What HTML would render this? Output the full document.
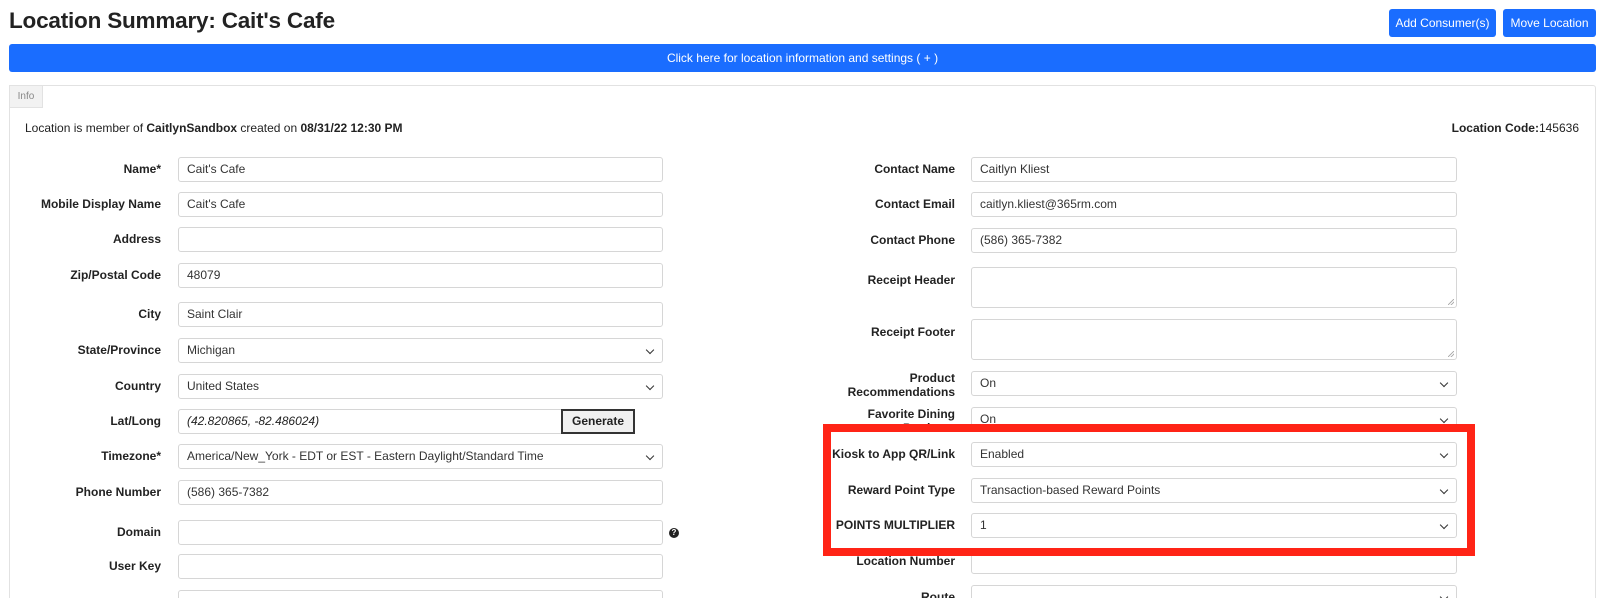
<!DOCTYPE html>
<html><head><meta charset="utf-8"><style>
*{box-sizing:border-box;margin:0;padding:0}
html,body{width:1603px;height:598px;overflow:hidden;background:#fff}
body{font-family:"Liberation Sans",Arial,sans-serif;color:#222}
#w{position:relative;width:1603px;height:598px;overflow:hidden}
.a{position:absolute}
h1{position:absolute;left:9px;top:8px;font-size:22.5px;font-weight:bold;color:#222;letter-spacing:-0.2px}
.btn{position:absolute;top:9px;height:28px;background:#1a6dff;color:#fff;border-radius:3px;font-size:12px;line-height:28px;text-align:center}
.bar{position:absolute;left:9px;top:44px;width:1587px;height:28px;background:#1a6dff;border-radius:3px;color:#fff;font-size:12px;line-height:28px;text-align:center}
.panel{position:absolute;left:9px;top:85px;width:1587px;height:530px;border:1px solid #e2e2e2;border-radius:3px}
.tab{position:absolute;left:9px;top:85px;width:34px;height:23px;background:#f2f2f2;border:1px solid #e2e2e2;font-size:10px;color:#888;line-height:21px;text-align:center}
.lbl{position:absolute;font-size:12px;font-weight:bold;text-align:right;color:#222;line-height:14px}
.in{position:absolute;height:25px;border:1px solid #d6d6d6;border-radius:3px;font-size:12px;line-height:23px;padding-left:8px;color:#333;background:#fff}
.sel::after{content:"";position:absolute;right:9px;top:8px;width:5px;height:5px;border-right:1.6px solid #333;border-bottom:1.6px solid #333;transform:rotate(45deg)}
.ta::after{content:"";position:absolute;right:2px;bottom:2px;width:6px;height:6px;background:linear-gradient(135deg,transparent 45%,#aaa 46%,#aaa 54%,transparent 55%,transparent 70%,#aaa 71%,#aaa 79%,transparent 80%)}
.red{position:absolute;left:823px;top:424px;width:652px;height:132px;border:8px solid #ff2416}
</style></head><body><div id="w">
<h1>Location Summary: Cait's Cafe</h1>
<div class="btn" style="left:1389px;width:107px">Add Consumer(s)</div>
<div class="btn" style="left:1503px;width:93px">Move Location</div>
<div class="bar">Click here for location information and settings ( + )</div>
<div class="panel"></div>
<div class="tab">Info</div>
<div class="a" style="left:25px;top:121px;font-size:12px">Location is member of <b>CaitlynSandbox</b> created on <b>08/31/22 12:30 PM</b></div>
<div class="a" style="right:24px;top:121px;font-size:12px"><b>Location Code:</b>145636</div>

<div class="lbl" style="right:1442px;top:162px">Name*</div><div class="in" style="left:178px;width:485px;top:157px">Cait's Cafe</div>
<div class="lbl" style="right:1442px;top:197px">Mobile Display Name</div><div class="in" style="left:178px;width:485px;top:192px">Cait's Cafe</div>
<div class="lbl" style="right:1442px;top:232px">Address</div><div class="in" style="left:178px;width:485px;top:227px"></div>
<div class="lbl" style="right:1442px;top:268px">Zip/Postal Code</div><div class="in" style="left:178px;width:485px;top:263px">48079</div>
<div class="lbl" style="right:1442px;top:307px">City</div><div class="in" style="left:178px;width:485px;top:302px">Saint Clair</div>
<div class="lbl" style="right:1442px;top:343px">State/Province</div><div class="in sel" style="left:178px;width:485px;top:338px">Michigan</div>
<div class="lbl" style="right:1442px;top:379px">Country</div><div class="in sel" style="left:178px;width:485px;top:374px">United States</div>
<div class="lbl" style="right:1442px;top:414px">Lat/Long</div><div class="in" style="left:178px;width:385px;top:409px;font-style:italic;color:#222">(42.820865, -82.486024)</div>
<div class="a" style="left:561px;top:409px;width:74px;height:25px;border:2px solid #333;background:#f0f0f0;font-size:12px;font-weight:bold;line-height:21px;text-align:center">Generate</div>
<div class="lbl" style="right:1442px;top:449px">Timezone*</div><div class="in sel" style="left:178px;width:485px;top:444px">America/New_York - EDT or EST - Eastern Daylight/Standard Time</div>
<div class="lbl" style="right:1442px;top:485px">Phone Number</div><div class="in" style="left:178px;width:485px;top:480px">(586) 365-7382</div>
<div class="lbl" style="right:1442px;top:525px">Domain</div><div class="in" style="left:178px;width:485px;top:520px"></div>
<div class="a" style="left:669px;top:528px;width:10px;height:10px;border-radius:50%;background:#222;color:#fff;font-size:8px;font-weight:bold;line-height:10px;text-align:center">?</div>
<div class="lbl" style="right:1442px;top:559px">User Key</div><div class="in" style="left:178px;width:485px;top:554px"></div>
<div class="in" style="left:178px;width:485px;top:590px"></div>

<div class="lbl" style="right:648px;top:162px">Contact Name</div><div class="in" style="left:971px;width:486px;top:157px">Caitlyn Kliest</div>
<div class="lbl" style="right:648px;top:197px">Contact Email</div><div class="in" style="left:971px;width:486px;top:192px">caitlyn.kliest@365rm.com</div>
<div class="lbl" style="right:648px;top:233px">Contact Phone</div><div class="in" style="left:971px;width:486px;top:228px">(586) 365-7382</div>
<div class="lbl" style="right:648px;top:273px">Receipt Header</div><div class="in ta" style="left:971px;width:486px;top:267px;height:41px"></div>
<div class="lbl" style="right:648px;top:325px">Receipt Footer</div><div class="in ta" style="left:971px;width:486px;top:319px;height:41px"></div>
<div class="lbl" style="right:648px;top:371px">Product<br>Recommendations</div><div class="in sel" style="left:971px;width:486px;top:371px">On</div>
<div class="lbl" style="right:648px;top:407px">Favorite Dining<br>Products</div><div class="in sel" style="left:971px;width:486px;top:407px">On</div>
<div class="lbl" style="right:648px;top:447px">Kiosk to App QR/Link</div><div class="in sel" style="left:971px;width:486px;top:442px">Enabled</div>
<div class="lbl" style="right:648px;top:483px">Reward Point Type</div><div class="in sel" style="left:971px;width:486px;top:478px">Transaction-based Reward Points</div>
<div class="lbl" style="right:648px;top:518px">POINTS MULTIPLIER</div><div class="in sel" style="left:971px;width:486px;top:513px">1</div>
<div class="lbl" style="right:648px;top:554px">Location Number</div><div class="in" style="left:971px;width:486px;top:549px"></div>
<div class="lbl" style="right:648px;top:590px">Route</div><div class="in sel" style="left:971px;width:486px;top:585px"></div>
<div class="red"></div>
</div></body></html>
